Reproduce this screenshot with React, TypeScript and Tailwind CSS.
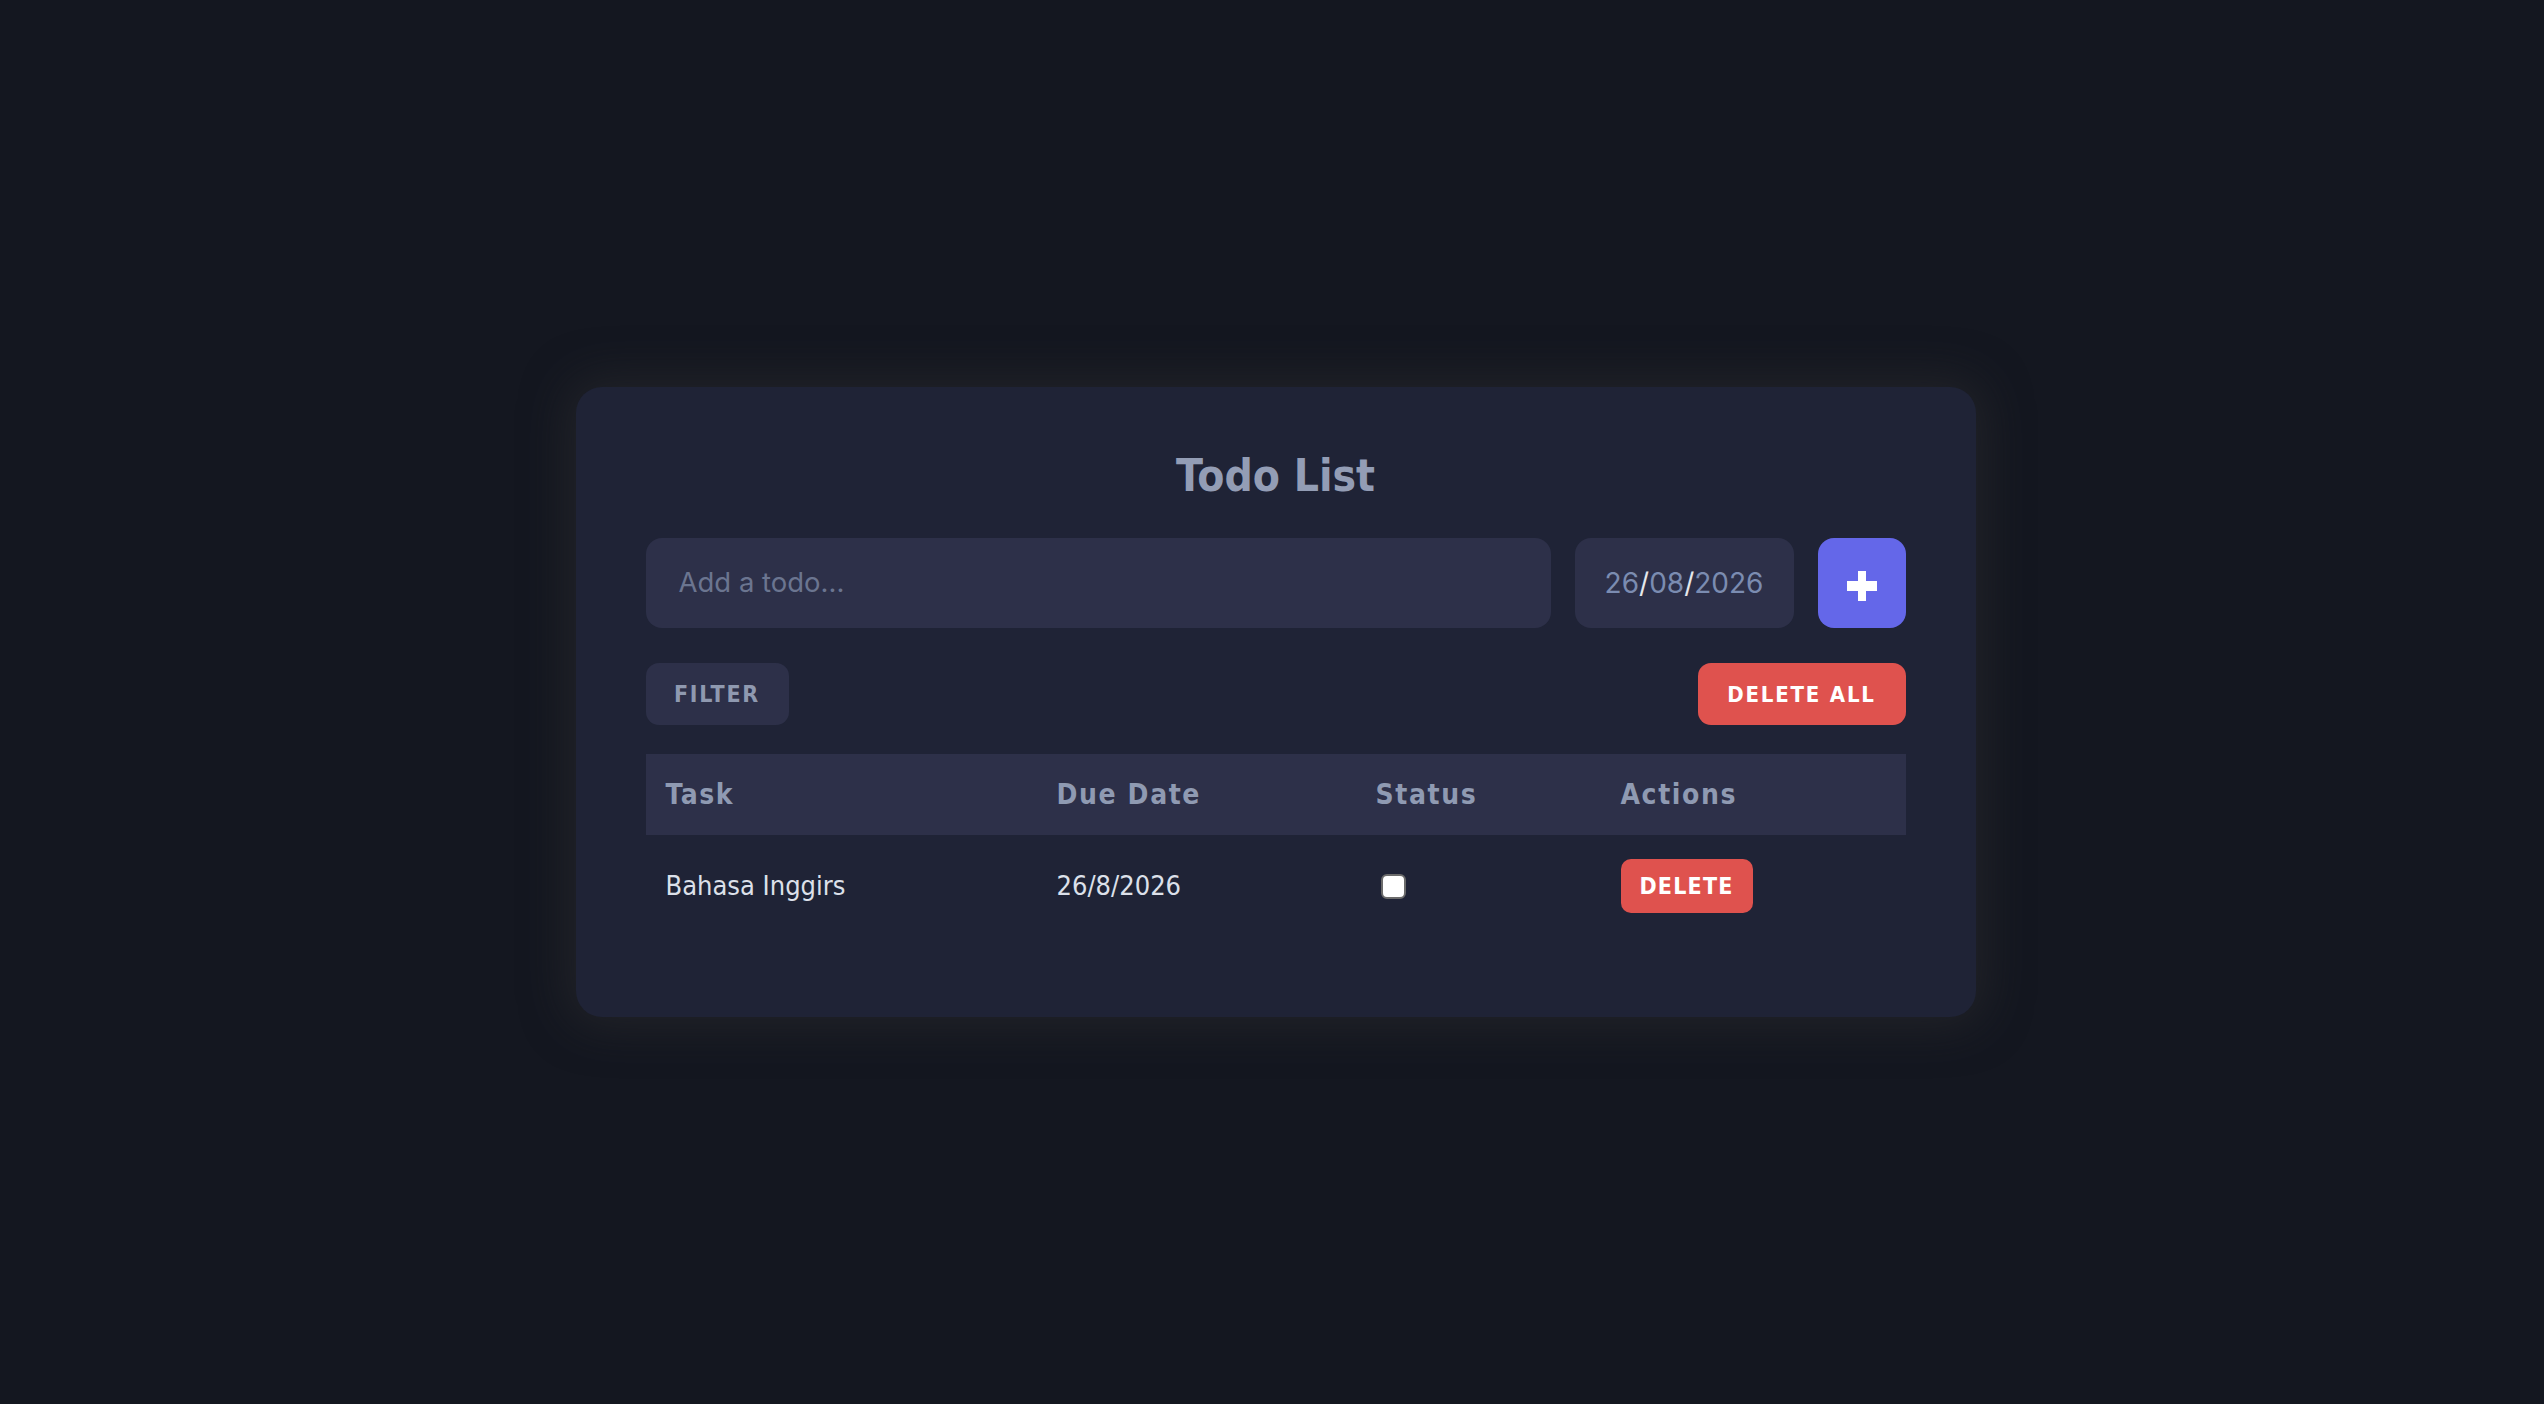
import React from "react";

const tahoma = "font-['DejaVu_Sans_Condensed','DejaVu_Sans',sans-serif]";

export default function App() {
  return (
    <div className="min-h-screen w-full bg-[#141720] flex items-center justify-center">
      <div
        className={`ml-[7px] w-[1400px] rounded-[26px] bg-[#1f2336] pt-[62px] px-[70px] pb-[80px] shadow-[0_0_45px_8px_rgba(45,45,48,0.55)] ${tahoma}`}
      >
        <h1 className="text-center text-[44px] leading-[53px] font-bold text-[#939db5] mb-[36px]">
          Todo List
        </h1>

        <div className="flex h-[90px] gap-[24px] mb-[35px]">
          <div className="flex-1 flex items-center rounded-[16px] bg-[#2d3049] pl-[33px] font-['Inter',sans-serif] text-[27.5px] text-[#6b7590]">
            Add a todo...
          </div>
          <div className="w-[219px] flex items-center justify-center rounded-[16px] bg-[#2d3049] font-['Inter',sans-serif] text-[28px] text-[#7b8cb1]">
            <span>26</span>
            <span className="text-[#e5e7eb]">/</span>
            <span>08</span>
            <span className="text-[#e5e7eb]">/</span>
            <span>2026</span>
          </div>
          <button className="w-[88px] flex items-center justify-center rounded-[16px] bg-[#6467e9]">
            <svg width="30" height="30" viewBox="0 0 30 30" className="mt-[6px]">
              <rect x="0" y="10" width="30" height="10" fill="#ffffff" />
              <rect x="11" y="0" width="8" height="30" fill="#ffffff" />
            </svg>
          </button>
        </div>

        <div className="flex h-[62px] items-center justify-between mb-[29px]">
          <button className="h-[62px] w-[143px] rounded-[13px] bg-[#2d3049] text-[23px] font-bold tracking-[1.8px] text-[#8f99b0]">
            FILTER
          </button>
          <button className="h-[62px] w-[208px] rounded-[13px] bg-[#df524e] text-[22px] font-bold tracking-[1.8px] text-white">
            DELETE ALL
          </button>
        </div>

        <table className="w-full table-fixed border-collapse">
          <colgroup>
            <col className="w-[391px]" />
            <col className="w-[319px]" />
            <col className="w-[245px]" />
            <col />
          </colgroup>
          <thead>
            <tr className="h-[81px] bg-[#2d3049]">
              <th className="text-left pl-[20px] text-[28px] tracking-[1.6px] font-bold text-[#8f9ab2]">Task</th>
              <th className="text-left pl-[20px] text-[28px] tracking-[1.6px] font-bold text-[#8f9ab2]">Due Date</th>
              <th className="text-left pl-[20px] text-[28px] tracking-[1.6px] font-bold text-[#8f9ab2]">Status</th>
              <th className="text-left pl-[20px] text-[28px] tracking-[1.6px] font-bold text-[#8f9ab2]">Actions</th>
            </tr>
          </thead>
          <tbody>
            <tr className="h-[102px]">
              <td className="pl-[20px] text-[27px] text-[#dce0ea]">Bahasa Inggirs</td>
              <td className="pl-[20px] text-[27px] text-[#dce0ea]">26/8/2026</td>
              <td className="pl-[20px]">
                <span className="ml-[5px] block w-[25px] h-[25px] rounded-[6px] bg-white border-2 border-[#6b6b6b]" />
              </td>
              <td className="pl-[20px]">
                <button className="h-[54px] w-[132px] rounded-[10px] bg-[#df524e] text-[23px] font-bold tracking-[1.2px] text-white">
                  DELETE
                </button>
              </td>
            </tr>
          </tbody>
        </table>
      </div>
    </div>
  );
}
